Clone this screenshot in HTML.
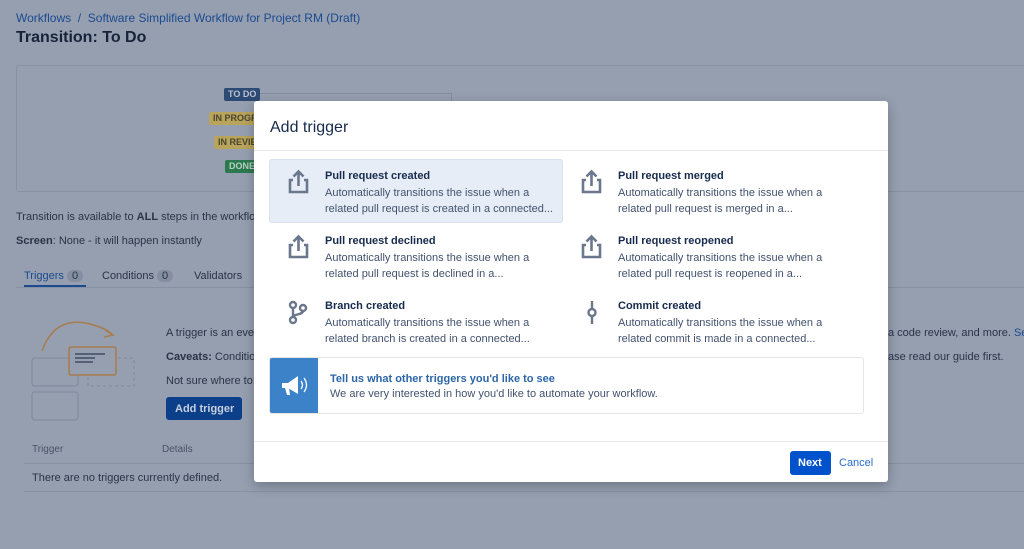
<!DOCTYPE html>
<html><head><meta charset="utf-8"><style>
*{box-sizing:border-box;margin:0;padding:0}
body{width:1024px;height:549px;overflow:hidden;background:#959fb0;font-family:"Liberation Sans",sans-serif;position:relative;color:#1c2638}
.a{position:absolute;white-space:nowrap}
.lnk{color:#1c4a8f}
.lz{font-size:9px;font-weight:bold;color:#4a4630;padding:1px 4px;border-radius:2px;line-height:11px}
.modal{position:absolute;left:254px;top:101px;width:634px;height:381px;background:#fff;border-radius:3px;box-shadow:0 4px 12px rgba(0,0,0,.25)}
.item{position:absolute;width:294px;height:64px;border-radius:3px}
.item .t{position:absolute;left:56px;top:11px;font-size:11px;font-weight:bold;color:#172b4d}
.item .d{position:absolute;left:56px;top:26px;font-size:11px;line-height:16px;color:#42526e;white-space:normal;width:236px}
.item svg{position:absolute;left:18px;top:9px}
</style></head><body>
<div class="a lnk" style="left:16px;top:11px;font-size:12px">Workflows&nbsp;&nbsp;/&nbsp;&nbsp;Software Simplified Workflow for Project RM (Draft)</div>
<div class="a" style="left:16px;top:29px;font-size:16px;font-weight:bold;color:#17233a">Transition: To Do</div>
<div class="a" style="left:16px;top:65px;width:1030px;height:127px;border:1px solid #8791a4;border-radius:3px"></div>
<div class="a" style="left:260px;top:93px;width:192px;height:8px;border-top:1px solid #838da0;border-right:1px solid #838da0"></div>
<div class="a lz" style="left:224px;top:88px;background:#2d4a74;color:#b8c2d2">TO DO</div>
<div class="a lz" style="left:209px;top:112px;background:#b8a45a">IN PROGR</div>
<div class="a lz" style="left:214px;top:136px;background:#b8a45a">IN REVIE</div>
<div class="a lz" style="left:225px;top:160px;background:#2b7a4f;color:#b8d0c2">DONE</div>
<div class="a" style="left:16px;top:211px;font-size:11px;color:#2a3446">Transition is available to <b>ALL</b> steps in the workflo</div>
<div class="a" style="left:16px;top:235px;font-size:11px;color:#2a3446"><b>Screen</b>: None - it will happen instantly</div>
<div class="a" style="left:16px;top:287px;width:1010px;border-top:1px solid #8791a4"></div>
<div class="a" style="left:24px;top:270px;font-size:11px;color:#1c4a8f">Triggers <span style="background:#848ea1;border-radius:8px;padding:0 5px;color:#2a3446">0</span></div>
<div class="a" style="left:24px;top:285px;width:62px;height:2px;background:#1c4a8f"></div>
<div class="a" style="left:102px;top:270px;font-size:11px;color:#2a3446">Conditions <span style="background:#848ea1;border-radius:8px;padding:0 5px">0</span></div>
<div class="a" style="left:194px;top:270px;font-size:11px;color:#2a3446">Validators</div>
<svg class="a" style="left:30px;top:320px" width="110" height="102" viewBox="30 320 110 102">
<path d="M42 351 Q55 315 90 324 Q105 328 112 334" fill="none" stroke="#a87b4d" stroke-width="1.5"/>
<path d="M105 330 L113 335 L104 337" fill="none" stroke="#a87b4d" stroke-width="1.5"/>
<rect x="32" y="358" width="46" height="28" rx="3" fill="none" stroke="#838da0" stroke-width="1.3"/>
<rect x="32" y="392" width="46" height="28" rx="3" fill="none" stroke="#838da0" stroke-width="1.3"/>
<rect x="88" y="358" width="46" height="28" fill="none" stroke="#838da0" stroke-width="1.3" stroke-dasharray="3 3"/>
<rect x="69" y="347" width="47" height="28" rx="2" fill="#959fb0" stroke="#a87b4d" stroke-width="1.5"/>
<path d="M75 354H105M75 358H95M75 362H93" stroke="#2d3a55" stroke-width="1.3"/>
</svg>
<div class="a" style="left:166px;top:327px;font-size:11px;color:#2a3446">A trigger is an eve</div>
<div class="a" style="left:166px;top:351px;font-size:11px;color:#2a3446"><b>Caveats:</b> Conditio</div>
<div class="a" style="left:166px;top:375px;font-size:11px;color:#2a3446">Not sure where to</div>
<div class="a" style="left:166px;top:397px;width:76px;height:23px;background:#0c3f8a;border-radius:3px;color:#c6cede;font-size:11px;font-weight:bold;padding:6px 0 0 9px">Add trigger</div>
<div class="a" style="left:888px;top:327px;font-size:11px;color:#2a3446">a code review, and more. <span class="lnk">Se</span></div>
<div class="a" style="left:888px;top:351px;font-size:11px;color:#2a3446">ase read our guide first.</div>
<div class="a" style="left:32px;top:444px;font-size:10px;color:#4a5468">Trigger</div>
<div class="a" style="left:162px;top:444px;font-size:10px;color:#4a5468">Details</div>
<div class="a" style="left:24px;top:463px;width:1010px;border-top:1px solid #8791a4"></div>
<div class="a" style="left:32px;top:472px;font-size:11px;color:#2a3446">There are no triggers currently defined.</div>
<div class="a" style="left:24px;top:491px;width:1010px;border-top:1px solid #8791a4"></div>

<div class="modal">
<div class="a" style="left:16px;top:18px;font-size:16px;color:#172b4d">Add trigger</div>
<div class="a" style="left:0;top:49px;width:634px;border-top:1px solid #e6e8ec"></div>
<div class="item" style="left:15px;top:58px;background:#e6edf7;border:1px solid #d6e0ef"></div>
<div class="item" style="left:15px;top:58px"><svg width="24" height="28" viewBox="0 0 24 28"><path d="M6 12H3v12h17V12h-3" fill="none" stroke="#6b778c" stroke-width="2.6"/><path d="M11.5 18V4M6.5 8.5l5-5 5 5" fill="none" stroke="#6b778c" stroke-width="2.6"/></svg><div class="t">Pull request created</div><div class="d">Automatically transitions the issue when a related pull request is created in a connected...</div></div>
<div class="item" style="left:308px;top:58px"><svg width="24" height="28" viewBox="0 0 24 28"><path d="M6 12H3v12h17V12h-3" fill="none" stroke="#6b778c" stroke-width="2.6"/><path d="M11.5 18V4M6.5 8.5l5-5 5 5" fill="none" stroke="#6b778c" stroke-width="2.6"/></svg><div class="t">Pull request merged</div><div class="d">Automatically transitions the issue when a related pull request is merged in a...</div></div>
<div class="item" style="left:15px;top:123px"><svg width="24" height="28" viewBox="0 0 24 28"><path d="M6 12H3v12h17V12h-3" fill="none" stroke="#6b778c" stroke-width="2.6"/><path d="M11.5 18V4M6.5 8.5l5-5 5 5" fill="none" stroke="#6b778c" stroke-width="2.6"/></svg><div class="t">Pull request declined</div><div class="d">Automatically transitions the issue when a related pull request is declined in a...</div></div>
<div class="item" style="left:308px;top:123px"><svg width="24" height="28" viewBox="0 0 24 28"><path d="M6 12H3v12h17V12h-3" fill="none" stroke="#6b778c" stroke-width="2.6"/><path d="M11.5 18V4M6.5 8.5l5-5 5 5" fill="none" stroke="#6b778c" stroke-width="2.6"/></svg><div class="t">Pull request reopened</div><div class="d">Automatically transitions the issue when a related pull request is reopened in a...</div></div>
<div class="item" style="left:15px;top:188px"><svg width="24" height="28" viewBox="0 0 24 28"><circle cx="6" cy="7" r="3" fill="none" stroke="#6b778c" stroke-width="2.4"/><circle cx="6" cy="22" r="3" fill="none" stroke="#6b778c" stroke-width="2.4"/><circle cx="16" cy="10" r="3" fill="none" stroke="#6b778c" stroke-width="2.4"/><path d="M6 10v9M16 13c0 4-10 3-10 6" fill="none" stroke="#6b778c" stroke-width="2.4"/></svg><div class="t">Branch created</div><div class="d">Automatically transitions the issue when a related branch is created in a connected...</div></div>
<div class="item" style="left:308px;top:188px"><svg width="24" height="28" viewBox="0 0 24 28"><path d="M12 3v8M12 18v8" stroke="#6b778c" stroke-width="2.4"/><circle cx="12" cy="14.5" r="3.5" fill="none" stroke="#6b778c" stroke-width="2.4"/></svg><div class="t">Commit created</div><div class="d">Automatically transitions the issue when a related commit is made in a connected...</div></div>
<div class="a" style="left:15px;top:256px;width:595px;height:57px;border:1px solid #e3e5e9;border-radius:3px"></div>
<div class="a" style="left:16px;top:257px;width:48px;height:55px;background:#3b82c9;border-radius:2px 0 0 2px"><svg width="48" height="55" viewBox="0 0 48 55"><path d="M12 25h6l10-7v18l-10-6h-6z" fill="#fff"/><path d="M15 30l2 7h3l-1-7z" fill="#fff"/><path d="M31 23q3 4 0 8M34 20q5 7 0 14" fill="none" stroke="#fff" stroke-width="1.3"/></svg></div>
<div class="a" style="left:76px;top:272px;font-size:11px;font-weight:bold;color:#2c66a8">Tell us what other triggers you'd like to see</div>
<div class="a" style="left:76px;top:287px;font-size:11px;color:#42526e">We are very interested in how you'd like to automate your workflow.</div>
<div class="a" style="left:0;top:340px;width:634px;border-top:1px solid #e6e8ec"></div>
<div class="a" style="left:536px;top:350px;width:41px;height:24px;background:#0052cc;border-radius:3px;color:#fff;font-size:11px;font-weight:bold;padding:6px 0 0 8px">Next</div>
<div class="a" style="left:585px;top:356px;font-size:11px;color:#2b6cc4">Cancel</div>
</div>
</body></html>
